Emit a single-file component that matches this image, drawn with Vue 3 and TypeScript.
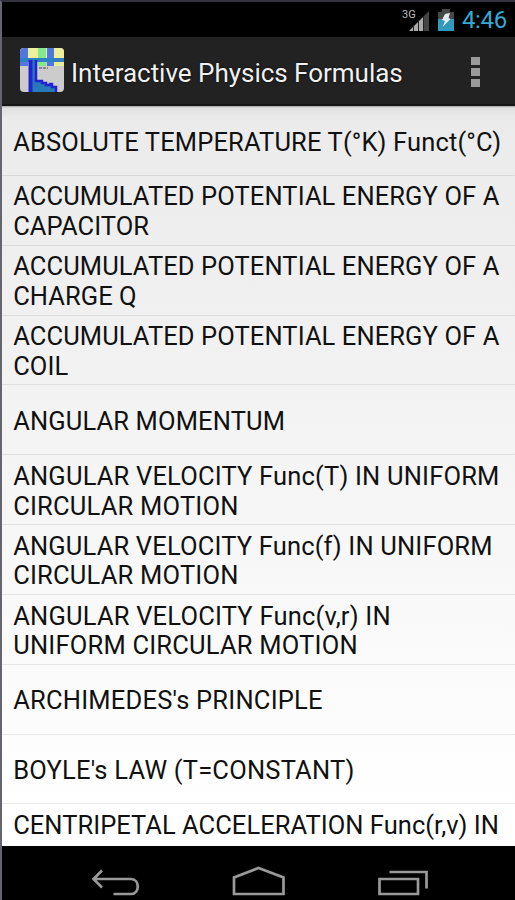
<script setup lang="ts">
interface Line {
  text: string
  tracking: number
}

const line = (text: string, tracking = 0): Line => ({ text, tracking })

const formulas: Line[][] = [
  [line('ABSOLUTE TEMPERATURE T(°K) Funct(°C)', 0.14)],
  [line('ACCUMULATED POTENTIAL ENERGY OF A', 0.09), line('CAPACITOR', 0.05)],
  [line('ACCUMULATED POTENTIAL ENERGY OF A', 0.09), line('CHARGE Q', 0.05)],
  [line('ACCUMULATED POTENTIAL ENERGY OF A', 0.09), line('COIL', 0.05)],
  [line('ANGULAR MOMENTUM', 0.13)],
  [line('ANGULAR VELOCITY Func(T) IN UNIFORM', 0.18), line('CIRCULAR MOTION', 0.2)],
  [line('ANGULAR VELOCITY Func(f) IN UNIFORM', 0.16), line('CIRCULAR MOTION', 0.2)],
  [line('ANGULAR VELOCITY Func(v,r) IN', 0.2), line('UNIFORM CIRCULAR MOTION', 0.2)],
  [line("ARCHIMEDES's PRINCIPLE", 0.21)],
  [line("BOYLE's LAW (T=CONSTANT)", 0.21)],
  [line('CENTRIPETAL ACCELERATION Func(r,v) IN', 0.03)],
]
</script>

<template>
  <div class="phone">
    <header class="status">
      <svg class="signal" width="28" height="26" viewBox="0 0 28 26">
        <text x="0" y="12" class="network">3G</text>
        <path d="M7 25 L21 11 V25Z" fill="#aaa" />
        <path d="M22 10 L27 5 V25H22Z" fill="#454545" />
        <path d="M11.5 19v6M16.5 14v11M21.5 10v15" stroke="#222" stroke-width="1" />
      </svg>
      <svg class="battery" width="16" height="24" viewBox="0 0 16 24">
        <path d="M4 1h8v3h4v7H0V4h4z" fill="#484848" />
        <path d="M0 11h16v12H0z" fill="#3298bd" />
        <path d="M7 6l5-1-1.500 5 2 1-8 8 2.500-6-3-1z" fill="#e3edf1" />
      </svg>
      <span class="clock">4:46</span>
    </header>
    <div class="actionbar">
      <svg class="logo" width="44" height="45" viewBox="0 0 44 45">
        <defs>
          <clipPath id="logoShape"><rect width="44" height="44" rx="4" /></clipPath>
        </defs>
        <g clip-path="url(#logoShape)">
          <rect width="44" height="45" fill="#ccc" />
          <rect width="44" height="12" fill="#eef09a" />
          <path d="M0 0h8v18H0zM27 0h7v18h-7z" fill="#5276df" />
          <path d="M18 0h8v18h-8z" fill="#83e98b" />
          <path d="M34 13h10v5H34z" fill="#e9ed95" />
          <path d="M0 10h44v4H0z" fill="#2f7fc4" />
          <path d="M19 20h9" stroke="#888" stroke-width="2" stroke-dasharray="3 1" />
          <path d="M9 46V12h8v21h5v2h4v2h4v-1h2v3h5v7z" fill="#2779b8" />
          <path d="M10.500 46V12" stroke="#2022d4" stroke-width="4" />
          <path d="M16 12v21h6v2h4v2h4v-1h2v3h4v5" fill="none" stroke="#2022d4" stroke-width="2.500" />
        </g>
      </svg>
      <h1 class="title">Interactive Physics Formulas</h1>
      <div class="overflow"><i></i><i></i><i></i></div>
    </div>
    <ul class="list">
      <li v-for="(lines, i) in formulas" :key="i" class="row">
        <span
          v-for="l in lines"
          :key="l.text"
          class="line"
          :style="{ letterSpacing: l.tracking + 'px' }"
        >{{ l.text }}</span>
      </li>
    </ul>
    <nav class="nav">
      <svg width="515" height="54" viewBox="0 0 515 54" fill="none" stroke="#999" stroke-width="2.7">
        <path d="M102 24.500l-8.500 8.500 8.500 8.500M94 33h37c9 0 9 15 0 15h-17.500" />
        <path d="M234 48v-16.500l24.500-9.500 25 9.500v16.500z" />
        <path d="M379.500 33h38.500v15h-38.500zM389.500 26h37v16.500" />
      </svg>
    </nav>
  </div>
</template>

<style>
body {
  margin: 0;
  background: #000;
}
</style>

<style scoped>
.phone {
  box-sizing: border-box;
  width: 515px;
  height: 900px;
  display: flex;
  flex-direction: column;
  overflow: hidden;
  border-left: 2px solid #65656d;
  border-top: 2px solid #33333f;
  background: #000;
  font-family: Roboto, sans-serif;
}
.status {
  height: 35px;
  flex: none;
  display: flex;
  justify-content: flex-end;
  align-items: flex-start;
  padding-right: 8px;
}
.signal {
  margin: 4px 8px 0 0;
}
.network {
  font-size: 11px;
  fill: #bbb;
}
.battery {
  margin: 6px 8px 0 0;
}
.clock {
  color: #33a9d6;
  font-size: 24px;
  line-height: 37px;
  letter-spacing: -0.3px;
}
.actionbar {
  box-sizing: border-box;
  height: 69px;
  flex: none;
  display: flex;
  align-items: center;
  padding: 0 35px 0 18px;
  background: #222;
  border-bottom: 2px solid #151515;
}
.title {
  flex: 1;
  margin: 4px 0 0 7px;
  color: #f1f1f1;
  font-size: 26px;
  font-weight: 400;
  line-height: 36px;
  letter-spacing: -0.02px;
  white-space: nowrap;
  text-shadow: 0 0 2px #000;
}
.overflow {
  display: flex;
  flex-direction: column;
  gap: 3px;
  padding-top: 2px;
}
.overflow i {
  width: 9px;
  height: 8px;
  background: #999;
}
.list {
  flex: none;
  height: 740px;
  margin: 0;
  padding: 0;
  list-style: none;
  overflow: hidden;
  background: linear-gradient(#a8a8a8 0, #e0e0e0 2px, #ebebeb 12px, #f4f4f4 340px, #fff 700px);
}
.row {
  box-sizing: border-box;
  height: 69.85px;
  display: flex;
  flex-direction: column;
  justify-content: center;
  padding: 4px 0 0 11.200px;
  border-bottom: 1.500px solid rgba(0, 0, 0, 0.08);
}
.row:last-child {
  height: 42px;
  justify-content: flex-start;
  padding-top: 6.500px;
  border-bottom: 0;
}
.line {
  color: #111;
  font-size: 25.500px;
  line-height: 29.800px;
  white-space: nowrap;
}
.nav {
  height: 54px;
  flex: none;
}
.nav svg {
  display: block;
  margin-left: -2px;
}
</style>
